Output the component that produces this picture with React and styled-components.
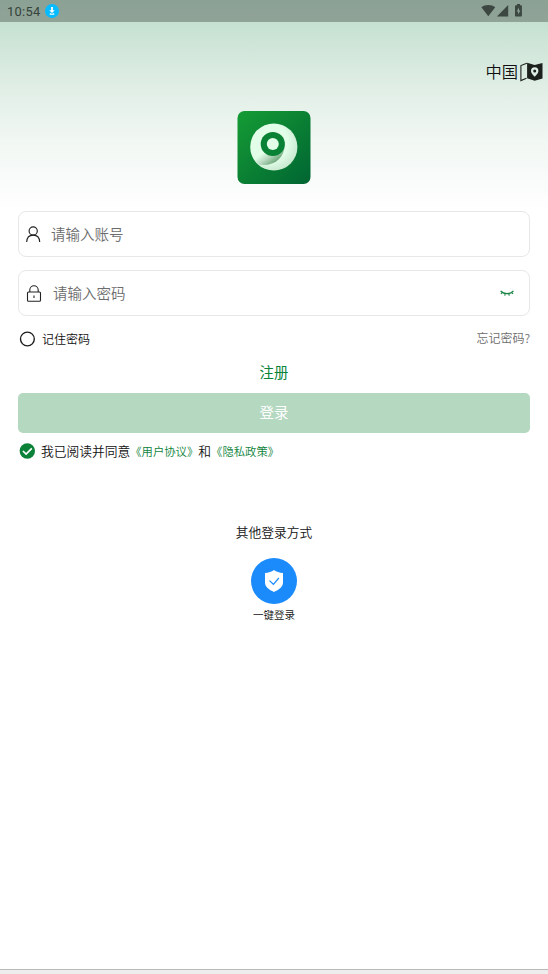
import React, { useState } from 'react';
import styled, { createGlobalStyle } from 'styled-components';

export default function App() {
    const [account, setAccount] = useState('');
    const [password, setPassword] = useState('');

    return (
        <Page>
            <GlobalStyle />
            <StatusBar>
                <Clock>10:54</Clock>
                <DownloadIcon />
                <SystemIcons />
            </StatusBar>

            <RegionBar>
                <RegionName>中国</RegionName>
                <MapIcon />
            </RegionBar>

            <LogoWrap>
                <Logo />
            </LogoWrap>

            <Form>
                <Field>
                    <UserIcon />
                    <FieldInput
                        $indent={11}
                        placeholder="请输入账号"
                        value={account}
                        onChange={(e) => setAccount(e.target.value)}
                    />
                </Field>
                <Field>
                    <LockIcon />
                    <FieldInput
                        $indent={12}
                        type="password"
                        placeholder="请输入密码"
                        value={password}
                        onChange={(e) => setPassword(e.target.value)}
                    />
                    <ClosedEyeIcon />
                </Field>

                <OptionsRow>
                    <Remember>
                        <RadioIcon />
                        记住密码
                    </Remember>
                    <Forgot>忘记密码?</Forgot>
                </OptionsRow>

                <RegisterLink>注册</RegisterLink>
                <LoginButton>登录</LoginButton>

                <Agreement>
                    <CheckIcon />
                    <span>我已阅读并同意</span>
                    <PolicyLink>《用户协议》</PolicyLink>
                    <span>和</span>
                    <PolicyLink>《隐私政策》</PolicyLink>
                </Agreement>
            </Form>

            <OtherLogin>
                <OtherTitle>其他登录方式</OtherTitle>
                <QuickButton>
                    <ShieldIcon />
                </QuickButton>
                <QuickLabel>一键登录</QuickLabel>
            </OtherLogin>

            <BottomEdge />
        </Page>
    );
}

/* Icons */
function DownloadIcon() {
    return (
        <svg width="14" height="14" viewBox="0 0 14 14">
            <circle cx="7" cy="7" r="7" fill="#06BBFF" />
            <path d="M6.1 3h1.8v3.2h1.9L7 9 4.2 6.2h1.9z" fill="#fff" />
            <path d="M4.8 9.2h1.1L7 10l1.1-.8h1.1v1.6H4.8z" fill="#fff" />
        </svg>
    );
}

function SystemIcons() {
    return (
        <StatusIcons width="43" height="14" viewBox="0 0 43 14" fill="#3B4740">
            <path d="M.4 3.2C4 .3 10.6.3 14.2 3.2L7.3 12.2z" />
            <path d="M27.2 1v11.5H15.900z" />
            <path
                fillRule="evenodd"
                d="M34.8 1.2H36V0h3v1.2h1.1q.8 0 .8.8v9.8q0 .8-.8.8h-5.3q-.8 0-.8-.8V2q0-.8.8-.8zM38 3.600 35.700 7.500h1.400v3l2.300-4h-1.400z"
            />
        </StatusIcons>
    );
}

function MapIcon() {
    return (
        <svg width="23" height="20" viewBox="0 0 23 20">
            <path d="M6.800 1.200.9 3.600v15l5.600-2.300" fill="none" stroke="#1C211E" strokeWidth="1.1" />
            <path d="M7.100.7 14.600 3l7.900-2v15.600l-7.800 2.200-7.600-2.500z" fill="#1C211E" />
            <path
                fillRule="evenodd"
                d="M14.7 5.300a3.700 3.700 0 0 0-3.700 3.700c0 2.500 3.700 5.700 3.700 5.700s3.700-3.200 3.700-5.700a3.700 3.700 0 0 0-3.700-3.700zm0 2.100a1.500 1.500 0 1 1 0 3 1.500 1.500 0 0 1 0-3z"
                fill="#DDEDE4"
            />
        </svg>
    );
}

function Logo() {
    return (
        <svg width="74" height="74" viewBox="0 0 74 74">
            <defs>
                <linearGradient id="tile" x1="0" y1="0" x2="1" y2="1">
                    <stop offset="0" stopColor="#159C35" />
                    <stop offset="1" stopColor="#006532" />
                </linearGradient>
                <radialGradient id="disc" cx=".4" cy=".4" r=".66">
                    <stop offset=".6" stopColor="#E2FEE9" />
                    <stop offset="1" stopColor="#C6E6CD" />
                </radialGradient>
                <linearGradient id="shade" gradientUnits="userSpaceOnUse" x1="27" y1="41" x2="37" y2="54">
                    <stop offset="0" stopColor="#E2FEE9" />
                    <stop offset=".45" stopColor="#B5D6BC" />
                    <stop offset="1" stopColor="#5F9F6E" />
                </linearGradient>
            </defs>
            <rect x=".5" y="0" width="73" height="73" rx="7" fill="url(#tile)" />
            <circle cx="36.8" cy="36" r="23.6" fill="url(#disc)" />
            <path d="M21.5 53.6C36 56 47.5 48 47.9 33.5L26 40 15.5 43.5C16.5 47.5 19 51.5 21.5 53.6z" fill="url(#shade)" />
            <circle cx="35.8" cy="33" r="12.1" fill="#098235" />
            <circle cx="35.8" cy="33" r="6" fill="#E2FEE9" />
        </svg>
    );
}

function UserIcon() {
    return (
        <svg width="15" height="17" viewBox="0 0 15 17" fill="none" stroke="#222" strokeWidth="1.15">
            <circle cx="7.2" cy="5" r="4.1" />
            <path d="M.7 16C.9 11.7 3.4 9.1 7.2 9.1s6.3 2.600 6.500 6.900" />
        </svg>
    );
}

function LockIcon() {
    return (
        <svg width="16" height="17" viewBox="0 0 16 17" fill="none" stroke="#222" strokeWidth="1.1">
            <rect x="1.500" y="7" width="13" height="9.3" rx="1" />
            <path d="M3.800 6.900V5a4.200 4.200 0 0 1 8.400 0v1.900M8 10.400v2.700" />
        </svg>
    );
}

function ClosedEyeIcon() {
    return (
        <svg width="14" height="7" viewBox="0 0 14 7" fill="none" stroke="#188442" strokeWidth="1.15">
            <path d="M.6 1c3.400 3.500 9.400 3.500 12.800 0M2.500 2.300.9 3.900M5.300 3.500l-.6 2.200M8.700 3.500l.6 2.200M11.500 2.300l1.600 1.600" />
        </svg>
    );
}

function RadioIcon() {
    return (
        <svg width="16" height="16" viewBox="0 0 16 16">
            <circle cx="8.4" cy="8" r="6.900" fill="none" stroke="#1E1E1E" strokeWidth="1.4" />
        </svg>
    );
}

function CheckIcon() {
    return (
        <svg width="16" height="16" viewBox="0 0 16 16">
            <circle cx="8.3" cy="8" r="7.7" fill="#0B8238" />
            <path d="m3.9 8 3.2 3.100 5.700-5.700" fill="none" stroke="#fff" strokeWidth="1.7" />
        </svg>
    );
}

function ShieldIcon() {
    return (
        <svg width="18" height="22" viewBox="0 0 18 22">
            <path d="M9 0c2.500 1.800 5.400 2.800 9 2.900v9.500c0 4.200-3.800 7.200-9 9.500-5.200-2.300-9-5.300-9-9.500V2.900C3.600 2.800 6.500 1.800 9 0z" fill="#fff" />
            <path d="m4.500 10.600 3.900 3.700 5.400-6.300" fill="none" stroke="#1B8BFC" strokeWidth="1.2" />
        </svg>
    );
}

/* Styled Components */
const GlobalStyle = createGlobalStyle`
    * {
        box-sizing: border-box;
    }

    body {
        margin: 0;
        background: #fff;
        font-family: 'Noto Sans CJK SC', sans-serif;
        font-weight: 350;
        color: #111;
    }

    svg {
        display: block;
        flex-shrink: 0;
    }

    button {
        font-family: inherit;
        font-weight: inherit;
        border: none;
        padding: 0;
        cursor: pointer;
    }
`;

const Page = styled.div`
    display: flex;
    flex-direction: column;
    height: 974px;
    background: linear-gradient(180deg, #C0DDCC 0, #C6E1D1 24px, #DEEDE4 80px, #F1F7F3 140px, #FFFFFF 212px);
`;

const StatusBar = styled.div`
    display: flex;
    align-items: center;
    height: 22px;
    padding: 0 24px 0 7px;
    background: rgba(0, 0, 0, 0.27);
`;

const Clock = styled.span`
    width: 38px;
    padding-top: 1px;
    font-family: Roboto, sans-serif;
    font-size: 12.8px;
    font-weight: 400;
    letter-spacing: 0.3px;
    line-height: 22px;
    color: #34423A;
`;

const StatusIcons = styled.svg`
    margin-left: auto;
    margin-bottom: 1px;
`;

const RegionBar = styled.div`
    display: flex;
    align-items: center;
    justify-content: flex-end;
    height: 20px;
    margin-top: 39px;
    padding-right: 5px;

    svg {
        margin-top: 1px;
    }
`;

const RegionName = styled.span`
    margin-right: 2px;
    font-size: 16.3px;
    line-height: 20px;
`;

const LogoWrap = styled.div`
    display: flex;
    justify-content: center;
    margin-top: 30px;
`;

const Form = styled.div`
    display: flex;
    flex-direction: column;
    padding: 0 18px;
    margin-top: 26px;
`;

const Field = styled.label`
    display: flex;
    align-items: center;
    height: 46px;
    margin-bottom: 13px;
    padding: 0 15px 0 7px;
    background: #fff;
    border: 1px solid #E6E7E6;
    border-radius: 8px;
`;

const FieldInput = styled.input`
    flex: 1;
    min-width: 0;
    height: 30px;
    margin-left: ${(props) => props.$indent - 1}px;
    padding: 0 0 1px;
    border: none;
    outline: none;
    background: none;
    font-family: inherit;
    font-size: 14.5px;
    font-weight: inherit;
    color: #222;

    &::placeholder {
        color: #6C6C6C;
        opacity: 1;
    }
`;

const OptionsRow = styled.div`
    display: flex;
    justify-content: space-between;
    height: 20px;
    font-size: 12px;
    line-height: 20px;
`;

const Remember = styled.div`
    display: flex;
    align-items: center;
    padding-left: 1px;

    svg {
        margin-right: 7px;
    }
`;

const Forgot = styled.span`
    height: 20px;
    line-height: 18px;
    color: #6C6C6C;
`;

const RegisterLink = styled.button`
    align-self: center;
    height: 24px;
    margin-top: 11px;
    background: none;
    font-size: 14.4px;
    font-weight: 400;
    line-height: 24px;
    color: #0B8238;
`;

const LoginButton = styled.button`
    height: 40px;
    margin-top: 9px;
    padding-bottom: 3px;
    background: #B4D8C0;
    border-radius: 5px;
    font-size: 14.5px;
    font-weight: 400;
    color: #fff;
`;

const Agreement = styled.div`
    display: flex;
    align-items: center;
    height: 20px;
    margin-top: 8px;
    padding-left: 1px;
    font-size: 12.75px;
    line-height: 20px;
    white-space: nowrap;

    svg {
        margin-right: 6px;
    }
`;

const PolicyLink = styled.span`
    font-size: 11.35px;
    color: #0B8238;
`;

const OtherLogin = styled.div`
    display: flex;
    flex-direction: column;
    align-items: center;
    margin-top: 61px;
`;

const OtherTitle = styled.div`
    font-size: 12.75px;
    line-height: 20px;
`;

const QuickButton = styled.button`
    display: flex;
    align-items: center;
    justify-content: center;
    width: 46px;
    height: 46px;
    margin-top: 16px;
    background: #1B8BFC;
    border-radius: 50%;
`;

const QuickLabel = styled.div`
    margin-top: 3px;
    font-size: 10.5px;
    line-height: 16px;
`;

const BottomEdge = styled.div`
    height: 5px;
    margin-top: auto;
    background: #EDEDED;
    border-top: 1px solid #B9B9B9;
`;
